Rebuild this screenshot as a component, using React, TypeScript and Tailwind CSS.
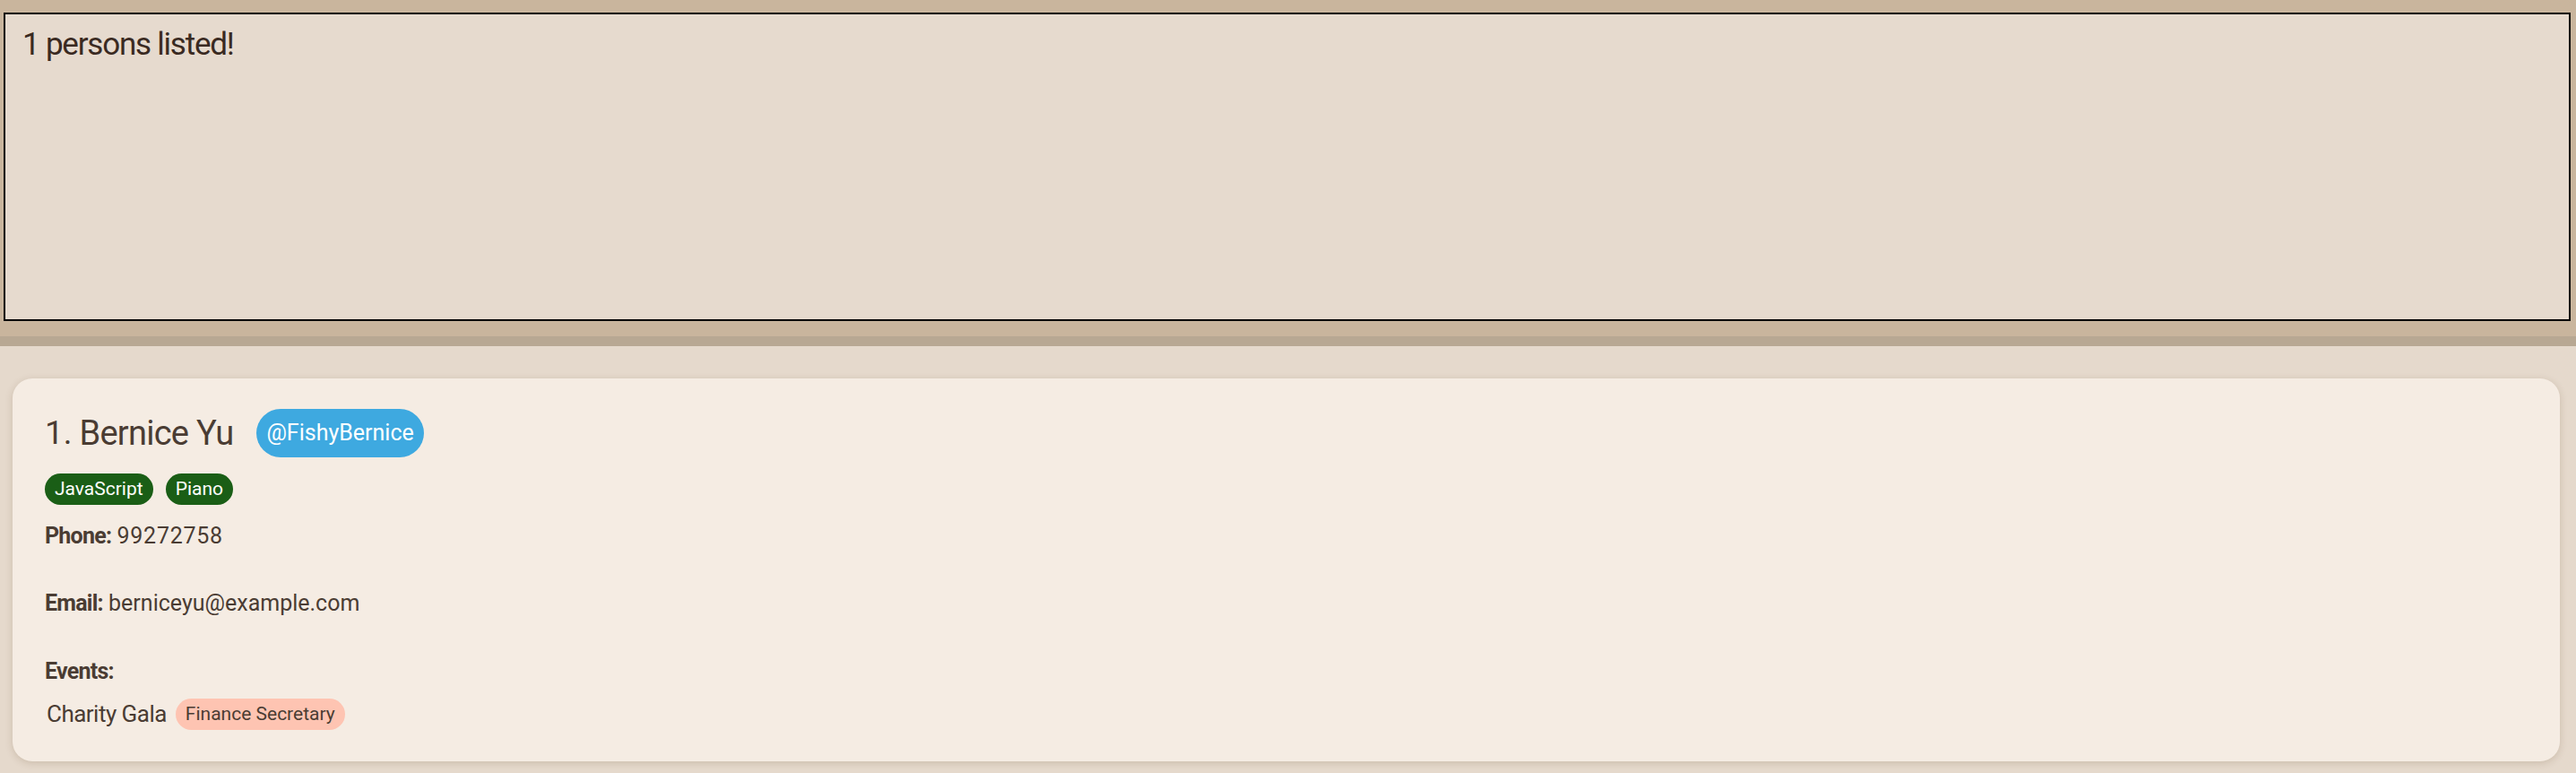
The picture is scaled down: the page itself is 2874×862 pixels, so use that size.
import React from 'react';

const font = { fontFamily: 'Roboto, "Noto Sans", sans-serif' };

export default function App() {
  return (
    <div className="w-[2874px] h-[862px] flex flex-col bg-[#e5d9cc] text-[#4a3c33]" style={font}>
      <div className="h-[375px] bg-[#c9b59d] pt-[14px] pl-[4px] pr-[6px] pb-[17px] flex">
        <div className="flex-1 border-2 border-black bg-[#e6dace] px-[19px] pt-[12px]">
          <p className="text-[35px] leading-[44px] tracking-[-0.035em] text-[#3a2a22]">1 persons listed!</p>
        </div>
      </div>
      <div className="h-[11px] bg-[#b8a893]" />
      <div className="flex-1 pt-[36px] pl-[14px] pr-[18px] pb-[13px] flex">
        <div className="flex-1 rounded-[22px] bg-[#f5ece3] shadow-[0_2px_8px_rgba(90,60,30,0.18)] pl-[36px] pt-[34px] flex flex-col">
          <div className="flex items-center h-[54px]">
            <span className="text-[37px] text-[#4a3c33]">1.</span>
            <span className="ml-[8px] text-[38px] tracking-[-0.02em] text-[#4a3c33]">Bernice Yu</span>
            <span className="ml-[26px] h-[54px] px-[11px] rounded-full bg-[#3ea9e0] text-white text-[25px] flex items-center">
              @FishyBernice
            </span>
          </div>
          <div className="flex gap-[14px] mt-[18px]">
            <span className="h-[35px] px-[11px] rounded-full bg-[#1a5e16] text-white text-[21px] flex items-center">JavaScript</span>
            <span className="h-[35px] px-[11px] rounded-full bg-[#1a5e16] text-white text-[21px] flex items-center">Piano</span>
          </div>
          <div className="mt-[19px] text-[25px] leading-[32px]">
            <span className="font-bold tracking-[-0.03em]">Phone:</span> <span className="tracking-[0.03em]">99272758</span>
          </div>
          <div className="mt-[43px] text-[25px] leading-[32px]">
            <span className="font-bold tracking-[-0.03em]">Email:</span> berniceyu@example.com
          </div>
          <div className="mt-[44px] text-[25px] leading-[32px]">
            <span className="font-bold tracking-[-0.03em]">Events:</span>
          </div>
          <div className="mt-[12px] flex items-center gap-[10px] pl-[2px]">
            <span className="text-[26px] tracking-[-0.02em]">Charity Gala</span>
            <span className="h-[35px] px-[11px] rounded-full bg-[#fec4b2] text-[#4a3c33] text-[21px] flex items-center">Finance Secretary</span>
          </div>
        </div>
      </div>
    </div>
  );
}
